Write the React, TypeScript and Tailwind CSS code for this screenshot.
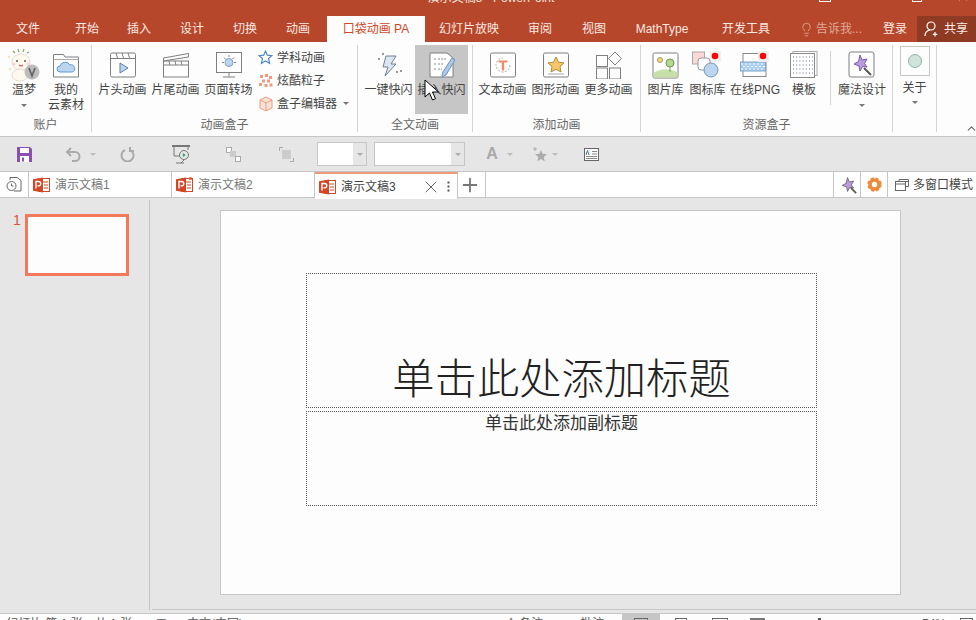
import type { ReactNode } from "react";
import { Lightbulb, X, Plus, ChevronUp } from "lucide-react";

const FONT = "font-['Liberation_Sans','Noto_Sans_CJK_SC',sans-serif]";

const TABS = [
  { label: "文件", w: "w-[56px]" },
  { label: "开始", w: "w-[62px]" },
  { label: "插入", w: "w-[42px]" },
  { label: "设计", w: "w-[64px]" },
  { label: "切换", w: "w-[42px]" },
  { label: "动画", w: "w-[61px] pl-[3px]" },
];

const TABS_AFTER = [
  { label: "幻灯片放映", w: "w-[88px]" },
  { label: "审阅", w: "w-[54px]" },
  { label: "视图", w: "w-[54px]" },
  { label: "MathType", w: "w-[82px]" },
  { label: "开发工具", w: "w-[86px]" },
];

function Caret({ className = "" }: { className?: string }) {
  return <span className={`inline-block h-0 w-0 border-x-[3px] border-t-[3px] border-x-transparent border-t-[#777] ${className}`} />;
}

function Big({ label, icon, w = "w-[53px]", active, caret }: { label: ReactNode; icon: ReactNode; w?: string; active?: boolean; caret?: boolean }) {
  return (
    <div className={`flex h-[69px] shrink-0 flex-col items-center pt-[5px] ${w} ${active ? "bg-[#c6c6c6]" : ""}`}>
      <div className="flex h-[30px] w-[40px] items-center justify-center">{icon}</div>
      <div className="mt-[3px] whitespace-nowrap text-center text-[12px] leading-[15px] text-[#444]">{label}</div>
      {caret && <Caret className="mt-[6px]" />}
    </div>
  );
}

function Group({ title, w, children }: { title: string; w: string; children: ReactNode }) {
  return (
    <div className={`flex h-[87px] shrink-0 flex-col border-r border-[#d4d4d4] ${w}`}>
      <div className="flex h-[69px] shrink-0 items-start">{children}</div>
      <div className="h-[18px] whitespace-nowrap pt-[3px] text-center text-[12px] leading-[16px] text-[#666]">{title}</div>
    </div>
  );
}

function Board({ children }: { children: ReactNode }) {
  return (
    <svg width="28" height="28" viewBox="0 0 28 28" fill="none">
      <rect x="1.5" y="2" width="25" height="24" rx="1.5" fill="#fff" stroke="#7f7f7f" />
      {children}
    </svg>
  );
}

function Small({ icon, label, caret }: { icon: ReactNode; label: string; caret?: boolean }) {
  return (
    <div className="flex h-[23px] items-center gap-[4px] whitespace-nowrap text-[12px] text-[#444]">
      <span className="flex w-[15px] justify-center">{icon}</span>
      {label}
      {caret && <Caret className="ml-[2px]" />}
    </div>
  );
}

function PptIcon({ dot }: { dot?: boolean }) {
  return (
    <svg width="17" height="16" viewBox="0 0 17 16" className="shrink-0">
      <rect x="6" y="1.5" width="10.5" height="13" fill="#fff" stroke="#d24726" />
      <path d="M9 5h6M11 8h4M11 11h4" stroke="#d24726" />
      <path d="M0 2.2 10 .5v15L0 13.8z" fill="#d24726" />
      <path d="M3 11.5v-7h2.6a2 2 0 0 1 0 4.4H4.4" fill="none" stroke="#fff" strokeWidth="1.4" />
      {dot && <circle cx="14.5" cy="1.6" r="1.6" fill="#e8572c" />}
    </svg>
  );
}

function DocTab({ label, active, dot, w }: { label: string; active?: boolean; dot?: boolean; w: string }) {
  return (
    <div className={`flex h-[26px] shrink-0 items-center gap-[5px] border-r border-[#c6c6c6] pl-[4px] text-[12px] ${w} ${active ? "h-[27px] border-t-2 border-t-[#f0997a] bg-white text-[#444]" : "text-[#777]"}`}>
      <PptIcon dot={dot} />
      <span className="whitespace-nowrap">{label}</span>
      {active && (
        <span className="ml-auto mr-[7px] flex items-center gap-[6px]">
          <X size={20} strokeWidth={1.2} color="#666" />
          <svg width="3" height="11" viewBox="0 0 3 11" fill="#555"><rect x="0.5" y="0.5" width="2" height="2" /><rect x="0.5" y="4.5" width="2" height="2" /><rect x="0.5" y="8.5" width="2" height="2" /></svg>
        </span>
      )}
    </div>
  );
}

function Combo({ w }: { w: string }) {
  return (
    <div className={`flex h-[24px] shrink-0 items-center border border-[#c6c6c6] ${w}`}>
      <div className="h-full flex-1 bg-white" />
      <div className="flex h-full w-[13px] items-center justify-center"><Caret className="border-t-[#aaa]" /></div>
    </div>
  );
}

function Slot({ w, children }: { w: string; children?: ReactNode }) {
  return <div className={`flex shrink-0 items-center justify-center ${w}`}>{children}</div>;
}

const wandPath = "M11 3 13 8 18 7 15.5 11.5 18 15 13.5 14.5 11 19 10 14 5 12 9.5 9.5z";

export default function App() {
  return (
    <div className={`relative flex h-[620px] w-[976px] flex-col overflow-hidden bg-[#e6e6e6] ${FONT}`}>
      {/* title bar, cut off by the top of the window */}
      <div className="relative h-[16px] shrink-0 overflow-hidden bg-[#b7472a]">
        <div className="mt-[-9px] pl-[6px] text-center text-[12px] leading-[14px] text-[#f2e2dc]">演示文稿3 - PowerPoint</div>
        <span className="absolute left-[819px] top-[-8px] h-[10px] w-[12px] border border-white" />
        <span className="absolute left-[912px] top-[-8px] h-[10px] w-[10px] border border-white" />
        <X size={12} color="#fff" className="absolute left-[957px] top-[-9px]" />
      </div>

      {/* ribbon tabs */}
      <div className="flex h-[26px] shrink-0 items-center bg-[#b7472a] text-[12px] text-[#f7e9e4]">
        {TABS.map((t) => (
          <div key={t.label} className={`text-center ${t.w}`}>{t.label}</div>
        ))}
        <div className="flex h-full w-[98px] items-center justify-center bg-[#fdfdfd] text-[#d24726]">口袋动画 PA</div>
        {TABS_AFTER.map((t) => (
          <div key={t.label} className={`text-center ${t.w}`}>{t.label}</div>
        ))}
        <div className="flex w-[90px] items-center gap-[2px] pl-[10px] text-[#dfa998]">
          <Lightbulb size={15} strokeWidth={1.3} className="shrink-0" />
          <span className="whitespace-nowrap">告诉我...</span>
        </div>
        <div className="w-[32px] text-center">登录</div>
        <div className="ml-[6px] flex h-full flex-1 items-center gap-[5px] bg-[#8f3a22] pl-[7px]">
          <svg width="15" height="16" viewBox="0 0 15 16" fill="none" stroke="#fff" strokeWidth="1.2">
            <circle cx="7" cy="5" r="4" />
            <path d="M1 15q0-5 5-6M11 11v4.500M8.800 13.300h4.500" />
          </svg>
          <span>共享</span>
        </div>
      </div>

      {/* ribbon */}
      <div className="relative flex h-[94px] shrink-0 items-start bg-[#fdfdfd] pt-[3px]">
        <Group title="账户" w="w-[92px]">
          <div className="flex pl-[1px]">
            <Big
              w="w-[46px]"
              caret
              label="温梦"
              icon={
                <svg width="36" height="36" viewBox="0 0 36 36" fill="none">
                  <path d="M7 4l2 2M12 2l1 3M18 2l-1 3M23 5l-2 1" stroke="#8aa35a" strokeWidth="1.200" />
                  <ellipse cx="15" cy="15" rx="9" ry="8" fill="#fff9f0" stroke="#e6dccb" />
                  <ellipse cx="14" cy="28" rx="8" ry="6" fill="#fff9f0" stroke="#e6dccb" />
                  <circle cx="11" cy="14" r="1" fill="#555" /><circle cx="19" cy="14" r="1" fill="#555" />
                  <path d="M13 18q2 2 4 0" stroke="#d66" strokeWidth="1.200" />
                  <circle cx="8" cy="17" r="1.500" fill="#fad4cc" /><circle cx="22" cy="17" r="1.500" fill="#fad4cc" />
                  <circle cx="3" cy="10" r="1" fill="#f0dc7a" /><circle cx="4" cy="22" r="1" fill="#f0dc7a" />
                  <circle cx="26" cy="25" r="7.500" fill="#bdbdbd" />
                  <path d="M23 21l3 8 3-8" stroke="#666" strokeWidth="1.800" />
                </svg>
              }
            />
            <Big
              w="w-[38px]"
              label={<>我的<br />云素材</>}
              icon={
                <svg width="30" height="28" viewBox="0 0 30 28" fill="none">
                  <path d="M2.5 5V3.5h10L14 6h13.5v20h-25z" fill="#fff" stroke="#7f7f7f" />
                  <path d="M2.5 8.5h25" stroke="#aaa" />
                  <path d="M9 21a3 3 0 0 1 0-6 5.500 5.500 0 0 1 10-1 3.500 3.500 0 0 1 2 7z" fill="#bcd5ee" stroke="#5b9bd5" />
                </svg>
              }
            />
          </div>
        </Group>

        <Group title="动画盒子" w="w-[266px]">
          <div className="flex pl-[4px]">
            <Big
              label="片头动画"
              icon={
                <Board>
                  <path d="M1.500 7.500h25M7 2l1.500 5M13 2l1.500 5M19 2l1.500 5" stroke="#7f7f7f" />
                  <path d="M11 12l8 5-8 5z" fill="#bcd5ee" stroke="#5b7fa5" />
                </Board>
              }
            />
            <Big
              label="片尾动画"
              icon={
                <svg width="28" height="28" viewBox="0 0 28 28" fill="none" stroke="#7f7f7f">
                  <rect x="1.500" y="10" width="25" height="16" fill="#fff" />
                  <path d="M1.500 7l25-4.500v3.500l-25 4zM1.500 14h25M7 10l1 4M13 10l1 4M19 10l1 4" />
                </svg>
              }
            />
            <Big
              label="页面转场"
              icon={
                <svg width="28" height="28" viewBox="0 0 28 28" fill="none" stroke="#7f7f7f">
                  <rect x="1.500" y="1.500" width="25" height="20" fill="#fff" />
                  <circle cx="14" cy="11.500" r="4" fill="#bcd5ee" stroke="#7f9fbf" />
                  <path d="M14 4v2M7 11.500h2M19 11.500h2M9 6.500l1.500 1.500M19 6.500l-1.500 1.500M14 21.500v4M8 26h12" />
                </svg>
              }
            />
            <div className="ml-[3px] flex flex-col pt-[1px]">
              <Small
                label="学科动画"
                icon={
                  <svg width="15" height="15" viewBox="0 0 14 14" fill="none" stroke="#4a86c8" strokeWidth="1.100"><path d="M7 1l1.700 3.800L13 5.300 9.800 8l1 4.500L7 10.200 3.200 12.500 4.200 8 1 5.300l4.300-.5z" /></svg>
                }
              />
              <Small
                label="炫酷粒子"
                icon={
                  <svg width="14" height="14" viewBox="0 0 14 14" fill="#ee9a7c">
                    <rect x="1" y="1" width="3" height="3" /><rect x="6" y="0" width="3" height="3" /><rect x="10" y="2" width="3" height="3" />
                    <rect x="3" y="5.500" width="3" height="3" /><rect x="8" y="5.500" width="3" height="3" />
                    <rect x="0" y="9" width="3" height="3" /><rect x="5.500" y="10" width="3" height="3" /><rect x="10.500" y="9.500" width="3" height="3" />
                  </svg>
                }
              />
              <Small
                label="盒子编辑器"
                caret
                icon={
                  <svg width="14" height="15" viewBox="0 0 14 15" fill="#fbe3d8" stroke="#ee9a7c"><path d="M1 4l6-3 6 3v8l-6 3-6-3z" /><path d="M1 4l6 3 6-3M7 7v8" fill="none" /></svg>
                }
              />
            </div>
          </div>
        </Group>

        <Group title="全文动画" w="w-[115px]">
          <div className="flex pl-[4px]">
            <Big
              label="一键快闪"
              icon={
                <svg width="30" height="28" viewBox="0 0 30 28" fill="none">
                  <path d="M12 5h10l-5 8h5L11 25l3-9H9z" fill="#dbe7f4" stroke="#6e7f90" />
                  <circle cx="5" cy="8" r="1" fill="#777" /><circle cx="9" cy="3" r="1" fill="#777" />
                  <circle cx="23" cy="21" r="1" fill="#777" /><circle cx="27" cy="20" r="1" fill="#777" />
                </svg>
              }
            />
            <Big
              active
              label="插入快闪"
              icon={
                <svg width="28" height="28" viewBox="0 0 28 28" fill="none">
                  <path d="M2 2h17l6 5v19H2z" fill="#fff" stroke="#7f7f7f" />
                  <path d="M6 8h2M10 8h8M6 13h2M10 13h6M6 18h2M10 18h4" stroke="#888" strokeDasharray="2 1" />
                  <path d="M24 7l3 2-9 15-4 2 .5-4.500z" fill="#a9c8ea" stroke="#6d94bd" />
                </svg>
              }
            />
          </div>
        </Group>

        <Group title="添加动画" w="w-[168px]">
          <div className="flex pl-[3px]">
            <Big
              label="文本动画"
              icon={
                <Board>
                  <path d="M21 14a7 7 0 1 1-7-7" stroke="#aaa" strokeDasharray="2 1.500" />
                  <path d="M9.500 9.500h9v2h-3.300v8h-2.400v-8H9.500z" fill="#ee8a64" />
                </Board>
              }
            />
            <Big
              label="图形动画"
              icon={
                <Board>
                  <path d="M14 6l2.500 5.200 5.500.7-4 3.800 1 5.300-5-2.700-5 2.700 1-5.300-4-3.800 5.500-.7z" fill="#f6c667" stroke="#b08a3a" />
                  <path d="M6 23h16" stroke="#aaa" />
                </Board>
              }
            />
            <Big
              label="更多动画"
              icon={
                <svg width="28" height="28" viewBox="0 0 28 28" fill="none" stroke="#7f7f7f">
                  <rect x="1.500" y="4.500" width="11" height="11" />
                  <rect x="1.500" y="17" width="11" height="11" />
                  <rect x="14.500" y="17" width="11" height="11" />
                  <path d="M20 1l6.500 6.500L20 14l-6.500-6.500z" />
                </svg>
              }
            />
          </div>
        </Group>

        <Group title="资源盒子" w="w-[252px]">
          <div className="flex">
            <Big
              w="w-[49px]"
              label="图片库"
              icon={
                <svg width="27" height="27" viewBox="0 0 27 27" fill="none">
                  <rect x="1" y="1" width="25" height="25" rx="1.500" fill="#fff" stroke="#7f7f7f" />
                  <path d="M1.500 21q10-7 24-1v5.500h-24z" fill="#c7dfa9" />
                  <circle cx="8" cy="8" r="2.500" fill="#f2d77e" stroke="#aa9a55" />
                  <circle cx="18" cy="11" r="4" fill="#b6d78f" stroke="#6f9a55" />
                  <path d="M18 15v5" stroke="#6f9a55" />
                </svg>
              }
            />
            <Big
              w="w-[35px]"
              label="图标库"
              icon={
                <svg width="30" height="28" viewBox="0 0 30 28" fill="none" className="ml-[-2px]">
                  <rect x="0.500" y="1" width="12" height="12" fill="#fbd9d5" stroke="#aaa" />
                  <rect x="18" y="0" width="11" height="11" fill="#eee" />
                  <circle cx="23" cy="5" r="3.300" fill="#f00" />
                  <rect x="6" y="7" width="12" height="12" rx="3" fill="#fff" stroke="#999" />
                  <circle cx="19" cy="19" r="7" fill="#bcd5ee" stroke="#7795b5" />
                </svg>
              }
            />
            <Big
              w="w-[60px]"
              label="在线PNG"
              icon={
                <svg width="30" height="28" viewBox="0 0 30 28" fill="none">
                  <rect x="3" y="2.500" width="23" height="23" fill="#fff" stroke="#8a8a8a" />
                  <rect x="0.500" y="11" width="25" height="9" fill="#a9cdf0" stroke="#7ea6cc" />
                  <path d="M1 13h24M3 15.500h22M1 18h24" stroke="#fff" strokeDasharray="2 2" />
                  <rect x="18" y="0" width="11" height="11" fill="#eee" />
                  <circle cx="23" cy="5" r="3.300" fill="#f00" />
                </svg>
              }
            />
            <Big
              w="w-[38px]"
              label="模板"
              icon={
                <svg width="28" height="28" viewBox="0 0 28 28" fill="none">
                  <rect x="3" y="0.500" width="24" height="24" fill="#fff" stroke="#aaa" />
                  <rect x="0.500" y="2.500" width="24" height="24" fill="#fff" stroke="#8a8a8a" />
                  <path d="M3 6h20M3 10h20M3 14h20M3 18h20M3 22h20" stroke="#5c6f88" strokeDasharray="1 2.200" />
                </svg>
              }
            />
            <div className="ml-[7px] mt-[6px] h-[54px] w-px bg-[#d4d4d4]" />
            <Big
              w="w-[62px]"
              caret
              label="魔法设计"
              icon={
                <svg width="28" height="28" viewBox="0 0 28 28" fill="none">
                  <rect x="1" y="1" width="25" height="25" rx="2" fill="#fff" stroke="#7f7f7f" />
                  <g transform="translate(1 1)"><path d={wandPath} fill="#bb9be0" stroke="#7c5aa6" /></g>
                  <path d="M16 17l7 7" stroke="#555" strokeWidth="2" />
                </svg>
              }
            />
          </div>
        </Group>

        <Group title="" w="w-[44px]">
          <div className="flex w-full flex-col items-center pt-[1px]">
            <div className="flex h-[30px] w-[30px] items-center justify-center border border-[#c6c6c6]">
              <span className="h-[14px] w-[14px] rounded-full border border-[#8fb5a5] bg-[#cfe3da]" />
            </div>
            <div className="mt-[5px] text-[12px] leading-[15px] text-[#444]">关于</div>
            <Caret className="mt-[5px]" />
          </div>
        </Group>
        <ChevronUp size={13} color="#666" className="absolute bottom-[1px] right-[-2px]" />
      </div>

      {/* quick access toolbar */}
      <div className="flex h-[36px] shrink-0 items-center border-y border-[#c6c6c6] bg-[#e6e6e6]">
        <Slot w="w-[48px]">
          <svg width="15" height="15" viewBox="0 0 15 15"><path d="M0 0h13l2 2v13H0z" fill="#8a4fb0" /><rect x="3" y="1" width="9" height="5" fill="#fff" /><rect x="3" y="9" width="9" height="6" fill="#fff" /><rect x="5" y="10.500" width="2" height="4" fill="#8a4fb0" /></svg>
        </Slot>
        <Slot w="w-[39px] pl-[11px]">
          <svg width="16" height="15" viewBox="0 0 16 15" fill="none" stroke="#aaa" strokeWidth="2"><path d="M6 1 2 5l4 4M2 5h8a4 4 0 0 1 0 9H7" /></svg>
        </Slot>
        <Slot w="w-[12px]"><Caret className="border-t-[#bbb]" /></Slot>
        <Slot w="w-[56px]">
          <svg width="15" height="15" viewBox="0 0 15 15" fill="none" stroke="#aaa" strokeWidth="2"><path d="M5 3a6 6 0 1 0 5 0M10 0v4h4" /></svg>
        </Slot>
        <Slot w="w-[52px]">
          <svg width="18" height="19" viewBox="0 0 18 19" fill="none" stroke="#777"><path d="M0 1h18" strokeWidth="2" /><path d="M2 1v10h6" /><path d="M16 1v4" /><circle cx="12" cy="10" r="4.500" fill="#dcebe4" /><path d="M10.800 8v4l3-2z" fill="#4f9a7a" stroke="none" /><path d="M9 18l3-3M4 18h8" /></svg>
        </Slot>
        <Slot w="w-[52px]">
          <svg width="15" height="15" viewBox="0 0 15 15"><rect x="0.500" y="0.500" width="5" height="5" fill="#fff" stroke="#aaa" /><rect x="4" y="4" width="6" height="6" fill="#ccc" /><rect x="9.500" y="9.500" width="5" height="5" fill="#fff" stroke="#aaa" /></svg>
        </Slot>
        <Slot w="w-[54px]">
          <svg width="15" height="15" viewBox="0 0 15 15" fill="none"><path d="M0.500 4V.5H4M14.500 11v3.500H11" stroke="#aaa" /><rect x="3" y="3" width="9" height="9" fill="#ccc" /></svg>
        </Slot>
        <Combo w="w-[50px] ml-[4px]" />
        <div className="w-[7px] shrink-0" />
        <Combo w="w-[91px]" />
        <Slot w="w-[14px] ml-[20px]"><span className="text-[16px] font-bold text-[#aaa]">A</span></Slot>
        <Slot w="w-[8px] ml-[7px]"><Caret className="border-t-[#bbb]" /></Slot>
        <Slot w="w-[16px] ml-[18px]">
          <svg width="16" height="15" viewBox="0 0 16 15" fill="#aaa"><path d="M9 3l1.600 3.800 4.400.4-3.300 2.800 1 4.300L9 12l-3.700 2.300 1-4.300L3 7.200l4.400-.4z" /><path d="M3 0v4M1 2h4" stroke="#aaa" /></svg>
        </Slot>
        <Slot w="w-[8px] ml-[3px]"><Caret className="border-t-[#bbb]" /></Slot>
        <Slot w="w-[15px] ml-[25px]">
          <svg width="15" height="13" viewBox="0 0 15 13" fill="none"><rect x="0.500" y="0.500" width="14" height="12" fill="#fff" stroke="#666" /><path d="M8 3.500h5M8 6h5M2 8.500h11M2 10.500h11" stroke="#888" /><path d="M2 7l1.500-4.500L5 7" stroke="#3b6fb5" /></svg>
        </Slot>
      </div>

      {/* document tabs */}
      <div className="flex h-[26px] shrink-0 items-start border-b border-[#c6c6c6] bg-white">
        <Slot w="w-[29px] h-[25px] border-r border-[#c6c6c6]">
          <svg width="16" height="15" viewBox="0 0 16 15" fill="none" stroke="#666"><path d="M4 3V.5h7l4 3V14H8" /><circle cx="5.500" cy="9" r="4.500" fill="#fff" /><path d="M5.500 6.500V9h2" /></svg>
        </Slot>
        <DocTab label="演示文稿1" w="w-[143px]" />
        <DocTab label="演示文稿2" w="w-[143px]" dot />
        <DocTab label="演示文稿3" w="w-[143px]" active />
        <Slot w="w-[28px] h-[25px] border-r border-[#c6c6c6] pr-[3px]"><Plus size={22} color="#777" strokeWidth={2} /></Slot>
        <div className="flex-1" />
        <Slot w="w-[27px] h-[25px] border-l border-[#c6c6c6]">
          <svg width="19" height="19" viewBox="0 0 22 22"><path d={wandPath} fill="#bb9be0" stroke="#666" /><path d="M15 15l6 6" stroke="#555" strokeWidth="2" /></svg>
        </Slot>
        <Slot w="w-[27px] h-[25px] border-l border-[#c6c6c6]">
          <svg width="15" height="15" viewBox="0 0 15 15" fill="none"><circle cx="7.500" cy="7.500" r="4.500" stroke="#ee8a3a" strokeWidth="3.600" /><circle cx="7.500" cy="7.500" r="6.300" stroke="#ee8a3a" strokeWidth="1.800" strokeDasharray="3 2" /></svg>
        </Slot>
        <div className="flex h-[25px] w-[89px] shrink-0 items-center gap-[4px] border-l border-[#c6c6c6] pl-[7px] text-[12px] text-[#444]">
          <svg width="14" height="12" viewBox="0 0 14 12" fill="none" stroke="#666"><path d="M4 2.500V.5h9.500v7H11" /><rect x="0.500" y="2.500" width="10" height="9" /><path d="M0.500 5h10M4 2.500h9" /></svg>
          <span className="whitespace-nowrap">多窗口模式</span>
        </div>
      </div>

      {/* slide panel + editing area */}
      <div className="flex h-[415px] shrink-0">
        <div className="mb-[3px] mt-[2px] flex w-[150px] shrink-0 items-start border-r border-[#c6c6c6] pl-[13px] pt-[11px]">
          <span className="mt-[1px] text-[14px] leading-[16px] text-[#d9553a]">1</span>
          <div className="ml-[4px] mt-[3px] h-[62px] w-[104px] border-[3px] border-[#f4785a] bg-[#fdfdfd]" />
        </div>
        <div className="flex-1 pl-[2px] pt-[12px]">
          <div className="h-[400px] border-b border-[#c6c6c6]">
            <div className="ml-[68px] h-[385px] w-[681px] border border-[#c6c6c6] bg-[#fdfdfd] pl-[85px] pt-[62px]">
              <div className="flex h-[135px] w-[511px] items-end justify-center border border-dotted border-[#555] text-[42.3px] font-light leading-[54px] text-[#222]">
                单击此处添加标题
              </div>
              <div className="mt-[3px] h-[95px] w-[511px] border border-dotted border-[#555] pt-[2px] text-center text-[17px] leading-[20px] text-[#333]">
                单击此处添加副标题
              </div>
            </div>
          </div>
        </div>
      </div>

      {/* status bar, cut off by the bottom of the window */}
      <div className="flex h-[10px] shrink-0 items-start overflow-hidden border-t border-[#c6c6c6] bg-[#fdfdfd] pl-[6px] text-[12px] leading-[14px] text-[#555]">
        <span className="mt-[3px] w-[150px] whitespace-nowrap">幻灯片 第 1 张，共 1 张</span>
        <span className="mt-[3px] w-[31px]">☐</span>
        <span className="mt-[3px] w-[319px] whitespace-nowrap">中文(中国)</span>
        <span className="mt-[3px] w-[59px] whitespace-nowrap">≜ 备注</span>
        <span className="mt-[3px] w-[57px] whitespace-nowrap">▬ 批注</span>
        <div className="flex h-full w-[38px] justify-center bg-[#c6c6c6]"><span className="mt-[4px] h-[8px] w-[14px] border border-[#666]" /></div>
        <span className="ml-[15px] mt-[4px] h-[8px] w-[12px] border border-[#666]" />
        <span className="ml-[25px] mt-[4px] h-[8px] w-[16px] border border-[#666]" />
        <div className="ml-[22px] mt-[4px] h-[4px] w-[15px] bg-[#777]" />
        <div className="ml-[53px] mt-[4px] h-[3px] w-[3px] bg-[#555]" />
        <span className="ml-[101px] mt-[3px]">54%</span>
        <span className="ml-[14px] mt-[4px] h-[8px] w-[13px] border border-[#666]" />
      </div>

      {/* mouse pointer */}
      <svg width="16" height="24" viewBox="0 0 16 24" className="absolute left-[424px] top-[79px]">
        <path d="M1 1v17l4.500-4 3 7 3-1.300-3-6.700h6z" fill="#fff" stroke="#000" />
      </svg>
    </div>
  );
}
